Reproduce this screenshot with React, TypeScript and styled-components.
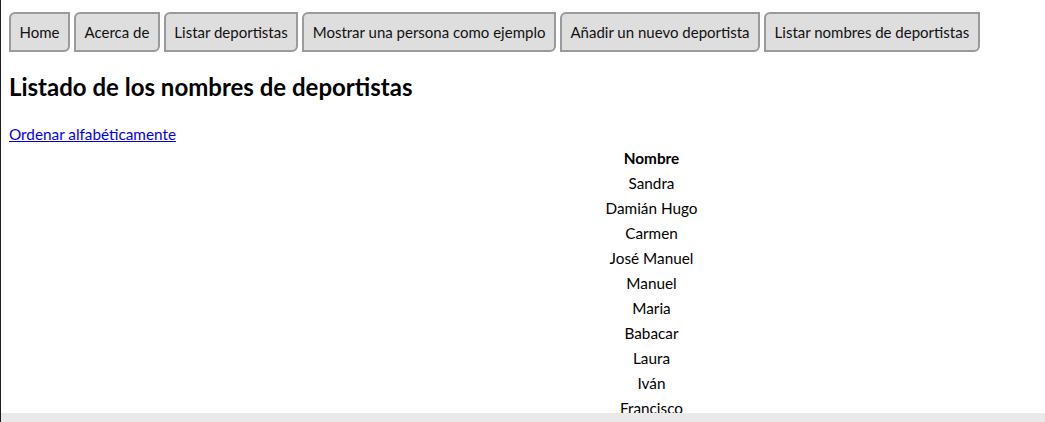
import React from "react";
import styled, { createGlobalStyle } from "styled-components";

const Global = createGlobalStyle`
  html, body { margin: 0; padding: 0; background: #fff; overflow: hidden; }
  body { font-family: Lato, "Noto Sans", sans-serif; color: #000; }
`;

const Page = styled.div`
  min-height: 422px;
  box-sizing: border-box;
  border-left: 1px solid #1c1c1c;
  padding: 12px 8px 0 8px;
`;

const Nav = styled.nav`
  display: flex;
  gap: 4px;
`;

const Tab = styled.button`
  font-family: inherit;
  font-size: 15px;
  line-height: 20px;
  color: #111;
  background: #dedede;
  border: 2px solid #9a9a9a;
  border-radius: 6px 0 6px 0;
  padding: 8px 8.5px;
  height: 40px;
  cursor: pointer;
`;

const Title = styled.h2`
  font-size: 24px;
  font-weight: 700;
  line-height: 30px;
  margin: 20px 0 22px 0;
`;

const SortLink = styled.a`
  display: block;
  width: max-content;
  color: #0000ee;
  text-decoration: underline;
  font-size: 15.3px;
  line-height: 20px;
`;

const TableWrap = styled.div`
  display: flex;
  justify-content: center;
  padding-left: 257px;
  margin-top: 1px;
`;

const Table = styled.table`
  border-collapse: collapse;
  font-size: 15.3px;
`;

const Th = styled.th`
  font-weight: 700;
  height: 25px;
  padding: 0;
  text-align: center;
`;

const Td = styled.td`
  height: 25px;
  padding: 0;
  text-align: center;
`;

const BottomBar = styled.div`
  position: fixed;
  left: 1px;
  right: 0;
  bottom: 0;
  height: 9px;
  background: #e9e9e9;
`;

const tabs = [
  "Home",
  "Acerca de",
  "Listar deportistas",
  "Mostrar una persona como ejemplo",
  "Añadir un nuevo deportista",
  "Listar nombres de deportistas",
];

const names = [
  "Sandra",
  "Damián Hugo",
  "Carmen",
  "José Manuel",
  "Manuel",
  "Maria",
  "Babacar",
  "Laura",
  "Iván",
  "Francisco",
];

export default function App() {
  return (
    <>
      <Global />
      <Page>
        <Nav>
          {tabs.map((t) => (
            <Tab key={t}>{t}</Tab>
          ))}
        </Nav>
        <Title>Listado de los nombres de deportistas</Title>
        <SortLink href="#">Ordenar alfabéticamente</SortLink>
        <TableWrap>
          <Table>
            <thead>
              <tr>
                <Th>Nombre</Th>
              </tr>
            </thead>
            <tbody>
              {names.map((n) => (
                <tr key={n}>
                  <Td>{n}</Td>
                </tr>
              ))}
            </tbody>
          </Table>
        </TableWrap>
      </Page>
      <BottomBar />
    </>
  );
}
